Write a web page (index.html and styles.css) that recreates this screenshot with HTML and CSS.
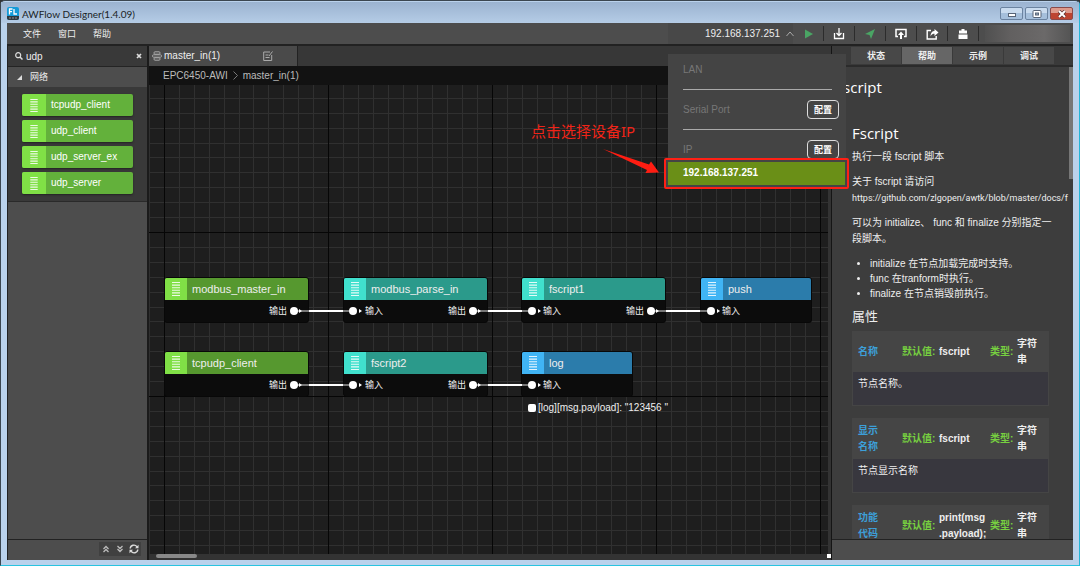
FILE: index.html
```html
<!DOCTYPE html>
<html lang="zh-CN">
<head>
<meta charset="utf-8">
<title>AWFlow Designer</title>
<link rel="stylesheet" href="styles.css">
</head>
<body>
<svg class="defs" width="0" height="0" aria-hidden="true">
  <symbol id="bars" viewBox="0 0 8 14"><path d="M0 .5h8M0 3.1h8M0 5.7h8M0 8.3h8M0 10.9h8M0 13.5h8" stroke="#fff" stroke-opacity=".85" stroke-width="1.1"/></symbol>
</svg>
<div class="window">
  <header class="titlebar">
    <svg class="logo" width="12" height="13" viewBox="0 0 12 13"><rect width="12" height="13" rx="2" fill="#159bd8"/><path d="M0 9h12v2a2 2 0 0 1-2 2H2a2 2 0 0 1-2-2z" fill="#30383e"/><path d="M2.500 7.500V2H5.500M2.500 4.600H5M7 2V7H10" fill="none" stroke="#fff" stroke-width="1.300"/><path d="M2 11h8" stroke="#8a9298" stroke-dasharray="2 1"/></svg>
    <span class="title">AWFlow Designer(1.4.09)</span>
    <button class="winbtn" aria-label="最小化"><svg width="10" height="8" viewBox="0 0 10 8"><rect x="1.500" y="3.500" width="7" height="3" fill="#fff" stroke="#586577"/></svg></button>
    <button class="winbtn" aria-label="最大化"><svg width="10" height="8" viewBox="0 0 10 8"><rect x="1" y=".5" width="8" height="7" rx="1" fill="#fff" stroke="#586577"/><rect x="3.500" y="3" width="3" height="2" fill="#9ab" stroke="#586577"/></svg></button>
    <button class="winbtn close" aria-label="关闭"><svg width="10" height="8" viewBox="0 0 10 8"><path d="M2 1l6 6M8 1L2 7" stroke="#5b3030" stroke-width="3.400"/><path d="M2 1l6 6M8 1L2 7" stroke="#fff" stroke-width="2"/></svg></button>
  </header>
  <div class="app">
    <div class="menubar">
      <nav class="menus"><button>文件</button><button>窗口</button><button>帮助</button></nav>
      <div class="device">
        <button class="device-btn">192.168.137.251 <svg width="8" height="6" viewBox="0 0 8 6"><path d="M.5 5L4 1l3.500 4" fill="none" stroke="#aaa"/></svg></button>
        <div class="dropdown">
          <div class="group"><span>LAN</span></div>
          <hr>
          <div class="group"><span>Serial Port</span><button class="config">配置</button></div>
          <hr>
          <div class="group"><span>IP</span><button class="config">配置</button></div>
          <button class="chosen">192.168.137.251</button>
        </div>
      </div>
      <div class="tools">
        <button aria-label="运行"><svg width="12" height="12" viewBox="0 0 12 12"><path d="M3 1.500v9L11 6z" fill="#4aa564"/></svg></button>
        <button aria-label="下载"><svg width="12" height="12" viewBox="0 0 12 12"><path d="M1.500 5v5.500h9V5M6 0v7M3.500 5L6 7.500 8.500 5" fill="none" stroke="#fff" stroke-width="1.300"/></svg></button>
        <button aria-label="发送"><svg width="12" height="12" viewBox="0 0 12 12"><path d="M11 1L1 6l4.500 1L7 11z" fill="#4aa564"/></svg></button>
        <button aria-label="上传"><svg width="12" height="12" viewBox="0 0 12 12"><path d="M3 8.500H1V1.500h10v7H9" fill="none" stroke="#fff" stroke-width="1.500"/><path d="M6 3.500L3 7h2v4h2V7h2z" fill="#fff"/></svg></button>
        <button aria-label="分享"><svg width="13" height="12" viewBox="0 0 13 12"><path d="M5 2.500H1.200v8.500h9V8" fill="none" stroke="#fff" stroke-width="1.400"/><path d="M8.500 1v2C6 3 4.500 5 4.500 8.500 5.500 6.300 7 5.800 8.500 5.800V8l4-3.500z" fill="#fff"/></svg></button>
        <button aria-label="清除"><svg width="12" height="12" viewBox="0 0 12 12"><path d="M4.500 1h3v1.500H10V5.500H2V2.500h2.500zM1.500 6.500h9V11h-9z" fill="#fff"/></svg></button>
        <span class="account"></span>
      </div>
    </div>
    <div class="main">
      <aside class="sidebar">
        <div class="search">
          <svg width="8" height="8" viewBox="0 0 8 8"><circle cx="3.200" cy="3.200" r="2.500" fill="none" stroke="#ddd" stroke-width="1.200"/><path d="M5 5l2.500 2.500" stroke="#ddd" stroke-width="1.500"/></svg>
          <input type="text" value="udp" aria-label="搜索节点">
          <button aria-label="清空"><svg width="6" height="6" viewBox="0 0 6 6"><path d="M1 1l4 4M5 1L1 5" stroke="#ddd" stroke-width="1.700"/></svg></button>
        </div>
        <button class="category"><svg width="5" height="5" viewBox="0 0 5 5"><path d="M5 0v5H0z" fill="#ddd"/></svg>网络</button>
        <div class="palette">
          <button class="item"><i><svg width="8" height="13"><use href="#bars"/></svg></i>tcpudp_client</button>
          <button class="item"><i><svg width="8" height="13"><use href="#bars"/></svg></i>udp_client</button>
          <button class="item"><i><svg width="8" height="13"><use href="#bars"/></svg></i>udp_server_ex</button>
          <button class="item"><i><svg width="8" height="13"><use href="#bars"/></svg></i>udp_server</button>
        </div>
        <footer class="sidefoot">
          <div class="footbtns">
            <button aria-label="全部折叠"><svg width="8" height="8" viewBox="0 0 8 8"><path d="M1.500 4L4 1.500 6.500 4M1.500 7L4 4.500 6.500 7" fill="none" stroke="#bbb" stroke-width="1.300"/></svg></button>
            <button aria-label="全部展开"><svg width="8" height="8" viewBox="0 0 8 8"><path d="M1.500 1L4 3.500 6.500 1M1.500 4L4 6.500 6.500 4" fill="none" stroke="#bbb" stroke-width="1.300"/></svg></button>
            <button aria-label="刷新"><svg width="10" height="10" viewBox="0 0 10 10"><path d="M1.200 4.500C1.500 1 6 0 8 2.800M8.800 5.500C8.500 9 4 10 2 7.200" fill="none" stroke="#ddd" stroke-width="1.400"/><path d="M9.500.8v3.500H6zM.5 9.200V5.700H4z" fill="#ddd"/></svg></button>
          </div>
        </footer>
      </aside>
      <section class="center">
        <div class="tabs"><div class="tab">
          <svg width="10" height="10" viewBox="0 0 10 10" fill="none" stroke="#aaa"><rect x="2" y=".8" width="6" height="2.400" rx="1"/><rect x=".5" y="3.800" width="9" height="2.400" rx="1"/><rect x="2" y="6.800" width="6" height="2.400" rx="1"/></svg>
          <span>master_in(1)</span>
          <svg width="10" height="10" viewBox="0 0 10 10" fill="none" stroke="#aaa"><path d="M7 1H.7v8.500h8V4M2.500 4h3M2.500 6.500h4M6 5l3.500-4.500"/></svg>
        </div></div>
        <nav class="crumbs"><a href="#">EPC6450-AWI</a><svg width="5" height="9" viewBox="0 0 5 9"><path d="M.5.5l4 4-4 4" fill="none" stroke="#777"/></svg><a href="#">master_in(1)</a></nav>
        <div class="canvas">
          <svg class="layer" width="100%" height="100%">
            <defs><pattern id="grid" x="15" y="-17" width="164" height="164" patternUnits="userSpaceOnUse">
              <path d="M15.500 0v164M30.500 0v164M45.500 0v164M60.500 0v164M75.500 0v164M89.500 0v164M104.500 0v164M119.500 0v164M134.500 0v164M149.500 0v164M0 15.500h164M0 30.500h164M0 45.500h164M0 60.500h164M0 75.500h164M0 89.500h164M0 104.500h164M0 119.500h164M0 134.500h164M0 149.500h164" stroke="#303030"/>
              <path d="M.5 0v164M0 .5h164" stroke="#060606"/></pattern></defs>
            <rect width="100%" height="100%" fill="url(#grid)"/>
          </svg>
          <div class="node green n1"><h3><i><svg width="8" height="14"><use href="#bars"/></svg></i>modbus_master_in</h3><p><span class="out">输出</span></p></div>
          <div class="node teal n2"><h3><i><svg width="8" height="14"><use href="#bars"/></svg></i>modbus_parse_in</h3><p><span class="in">输入</span><span class="out">输出</span></p></div>
          <div class="node teal n3"><h3><i><svg width="8" height="14"><use href="#bars"/></svg></i>fscript1</h3><p><span class="in">输入</span><span class="out">输出</span></p></div>
          <div class="node blue n4"><h3><i><svg width="8" height="14"><use href="#bars"/></svg></i>push</h3><p><span class="in">输入</span></p></div>
          <div class="node green n5"><h3><i><svg width="8" height="14"><use href="#bars"/></svg></i>tcpudp_client</h3><p><span class="out">输出</span></p></div>
          <div class="node teal n6"><h3><i><svg width="8" height="14"><use href="#bars"/></svg></i>fscript2</h3><p><span class="in">输入</span><span class="out">输出</span></p></div>
          <div class="node blue n7"><h3><i><svg width="8" height="14"><use href="#bars"/></svg></i>log</h3><p><span class="in">输入</span></p></div>
          <svg class="layer" width="100%" height="100%">
            <path d="M145 226h60M324 226h60M502 226h60M145 300h60M324 300h60" stroke="#777" stroke-width="2"/>
            <path d="M160 226h34M339 226h34M517 226h34M160 300h34M339 300h34" stroke="#fff" stroke-width="2"/>
            <g fill="#fff"><circle cx="145" cy="226" r="4"/><circle cx="204" cy="226" r="4"/><circle cx="324" cy="226" r="4"/><circle cx="383" cy="226" r="4"/><circle cx="502" cy="226" r="4"/><circle cx="562" cy="226" r="4"/><circle cx="145" cy="300" r="4"/><circle cx="204" cy="300" r="4"/><circle cx="324" cy="300" r="4"/><circle cx="383" cy="300" r="4"/>
            <path d="M150 224l3 2-3 2zM210 224l3 2-3 2zM329 224l3 2-3 2zM389 224l3 2-3 2zM507 224l3 2-3 2zM568 224l3 2-3 2zM150 298l3 2-3 2zM210 298l3 2-3 2zM329 298l3 2-3 2zM389 298l3 2-3 2z"/></g>
            <path d="M454 64L500 79.500 502 76.500 510 87.500 496.500 88 498 85z" fill="#ff1d12"/>
          </svg>
          <div class="status">[log][msg.payload]: "123456 "</div>
          <div class="hint">点击选择设备IP</div>
        </div>
        <div class="hscroll"><i></i><b></b></div>
      </section>
      <aside class="panel">
        <div class="paneltabs"><button>状态</button><button class="on">帮助</button><button>示例</button><button>调试</button></div>
        <div class="help">
          <h1>fscript</h1>
          <h2>Fscript</h2>
          <p>执行一段 fscript 脚本</p>
          <p>关于 fscript 请访问<br><a class="url" href="#">https://github.com/zlgopen/awtk/blob/master/docs/f</a></p>
          <p>可以为 initialize、 func 和 finalize 分别指定一段脚本。</p>
          <ul><li>initialize 在节点加载完成时支持。</li><li>func 在tranform时执行。</li><li>finalize 在节点销毁前执行。</li></ul>
          <h4>属性</h4>
          <div class="prop"><div class="head"><b class="name">名称</b><b class="key">默认值:</b><b>fscript</b><b class="key">类型:</b><b>字符串</b></div><div class="desc">节点名称。</div></div>
          <div class="prop"><div class="head"><b class="name">显示名称</b><b class="key">默认值:</b><b>fscript</b><b class="key">类型:</b><b>字符串</b></div><div class="desc">节点显示名称</div></div>
          <div class="prop"><div class="head"><b class="name">功能代码</b><b class="key">默认值:</b><b>print(msg<br>.payload);</b><b class="key">类型:</b><b>字符串</b></div></div>
          <i class="vthumb"></i>
        </div>
        <footer class="panelfoot"></footer>
      </aside>
    </div>
  </div>
</div>
</body>
</html>
```
FILE: styles.css
```css
* { box-sizing: border-box; }
body { margin: 0; height: 100vh; background: #333; font: 10px/14px "Liberation Sans", "Noto Sans CJK SC", sans-serif; color: #eee; overflow: hidden; }
button { font: inherit; color: inherit; background: none; border: 0; padding: 0; }
h1, h2, h3, h4, p, ul { margin: 0; font-weight: 400; }
svg { display: block; flex: none; }
.defs { position: absolute; }

.window { height: 100vh; display: flex; flex-direction: column; padding: 1px 6px 5px 6px; background: #bad2ec; border: 1px solid #3b4650; border-bottom: 1px solid #28c4e0; border-right-color: #23b5d8; border-radius: 5px 5px 0 0; }
.titlebar { display: flex; align-items: center; height: 21px; flex: none; background: linear-gradient(#9bb3d0, #b5cce6); margin: 0 -6px; padding: 2px 6px 0; gap: 1px; }
.title { color: #1a1f26; font: 10px/16px Lato, sans-serif; margin-left: 2px; flex: 1; }
.winbtn { width: 23px; height: 13px; border: 1px solid #6b83a0; border-radius: 2px; background: linear-gradient(#c9dbee 50%, #a5bfdb 50%); display: grid; place-items: center; }
.winbtn + .winbtn { margin-left: 1px; }
.close { background: linear-gradient(#dd9a8c 50%, #bd4431 50%); border-color: #8a4a4a; }

.app { flex: 1; min-height: 0; display: flex; flex-direction: column; background: #333; }
.menubar { height: 23px; flex: none; display: flex; background: #4d4d4d; border-bottom: 2px solid #222; align-items: stretch; }
.menus { display: flex; gap: 17px; padding-left: 16px; flex: 1; font-size: 9px; }
.device { position: relative; width: 125px; background: #484848; }
.device-btn { display: flex; align-items: center; gap: 6px; height: 21px; padding-left: 37px; white-space: nowrap; }
.dropdown { position: absolute; z-index: 5; top: 31px; left: 0; width: 178px; background: #444; display: flex; flex-direction: column; }
.group { height: 35px; padding: 0 7px 4px 15px; display: flex; justify-content: space-between; align-items: center; color: #777; }
.dropdown hr { width: 149px; margin: 0 0 4px 15px; border: 0; border-top: 1px solid #aaa; }
.config { width: 32px; height: 19px; border: 1px solid #ddd; border-radius: 4px; color: #fff; font-size: 9px; font-weight: 700; }
.chosen { height: 31px; margin: -11px -3px 0 -4px; padding: 0 0 2px 17px; text-align: left; font-weight: 700; background: #6a8f17; border: 2px solid #ff2015; border-radius: 2px; box-shadow: inset 0 0 0 2px #444; color: #fff; z-index: 1; }
.tools { display: flex; align-items: center; }
.tools button { width: 31px; height: 15px; display: grid; place-items: center; border-right: 1px solid #2c2c2c; }
.account { width: 85px; height: 17px; margin: 0 3px 0 6px; background: linear-gradient(90deg, #505050, #626060 30%, #6b6969 70%, #555); }

.main { flex: 1; min-height: 0; display: flex; }
.sidebar { width: 142px; flex: none; display: flex; flex-direction: column; border-right: 2px solid #1b1b1b; border-left: 1px solid #222; background: #4d4d4d; }
.search { height: 21px; display: flex; align-items: center; padding: 0 5px 0 7px; gap: 3px; background: #393939; border-bottom: 1px solid #242424; }
.search input { flex: 1; min-width: 0; border: 0; padding: 2px 0 0; background: none; color: #eee; font: 10px/14px "Liberation Sans", sans-serif; outline: 0; }
.category { height: 20px; display: flex; align-items: center; gap: 8px; padding-left: 9px; font-size: 9px; }
.palette { display: flex; flex-direction: column; gap: 4px; padding: 7px 14px; background: #393939; border-bottom: 1px solid #2a2a2a; }
.item { height: 22px; display: flex; align-items: center; gap: 5px; background: #63b13b; border-radius: 2px; color: #fff; overflow: hidden; box-shadow: 0 1px 2px #222; }
.item i { width: 24px; height: 22px; display: grid; place-items: center; background: #80e046; }
.sidefoot { margin-top: auto; height: 21px; border-top: 1px solid #222; display: flex; justify-content: flex-end; align-items: center; padding: 0 6px 2px 0; }
.footbtns { display: flex; background: #404040; }
.footbtns button { width: 14px; height: 14px; display: grid; place-items: center; }

.center { flex: 1; min-width: 0; display: flex; flex-direction: column; background: #333; }
.tabs { height: 20px; background: #373737; flex: none; }
.tab { width: 149px; height: 20px; display: flex; align-items: center; gap: 2px; padding: 0 24px 0 3px; background: #4a4a4a; border-right: 1px solid #222; }
.tab span { flex: 1; }
.crumbs { height: 19px; flex: none; display: flex; align-items: center; gap: 5px; padding-left: 14px; background: #121212; }
.crumbs a { color: #bbb; text-decoration: none; }
.canvas { flex: 1; position: relative; overflow: hidden; background: #1e1e1e; margin-right: 3px; }
.layer { position: absolute; inset: 0; }
.hscroll { height: 6px; flex: none; padding-left: 7px; display: flex; justify-content: space-between; }
.hscroll i { width: 41px; height: 4px; background: #888; border-radius: 2px; }
.hscroll b { width: 4px; height: 4px; background: #fff; }

.node { position: absolute; width: 145px; height: 46px; border: 1px solid #080808; border-radius: 3px; background: #0c0c0c; overflow: hidden; }
.node h3 { display: flex; align-items: center; gap: 5px; height: 22px; font-size: 11px; }
.node i { width: 22px; height: 22px; display: grid; place-items: center; }
.node p { height: 22px; display: flex; align-items: center; padding: 0 21px; font-size: 9px; }
.out { margin-left: auto; }
.green h3 { background: #56982f; }
.green i { background: #80e046; }
.teal h3 { background: #2b9a8b; }
.teal i { background: #40e0cd; }
.blue h3 { background: #2b7cab; }
.blue i { background: #40b4f4; }
.n1, .n2, .n3, .n4 { top: 192px; }
.n5, .n6, .n7 { top: 266px; }
.n1, .n5 { left: 15px; }
.n2, .n6 { left: 194px; }
.n3, .n7 { left: 372px; }
.n4 { left: 551px; }
.n4, .n7 { width: 112px; }
.status { position: absolute; left: 379px; top: 316px; display: flex; align-items: center; gap: 2px; }
.status::before { content: ""; width: 8px; height: 8px; border-radius: 2px; background: #fff; }
.hint { position: absolute; left: 382px; top: 36px; font: 15px/20px "Noto Sans", "Noto Sans CJK SC", sans-serif; color: #f02418; }

.panel { width: 242px; flex: none; border-left: 1px solid #151515; display: flex; flex-direction: column; background: #3d3d3d; }
.paneltabs { height: 21px; flex: none; display: flex; gap: 1px; padding: 1px 19px; border-bottom: 2px solid #2b2b2b; background: #3a3a3a; }
.paneltabs button { flex: 1; background: #484848; font-size: 9px; font-weight: 700; }
.paneltabs .on { background: #666; }
.help { position: relative; flex: 1; min-height: 0; overflow: hidden; padding: 9px 24px 0 20px; line-height: 16px; }
.help h1, .help h2 { font: 15px/22px "Open Sans", sans-serif; color: #fff; }
.help h1 { margin: 0 0 24px -14px; }
.help h2 { margin-bottom: 5px; }
.help p { margin: 0 -6px 9px 0; }
.url { white-space: nowrap; font-family: Roboto, sans-serif; font-size: 9px; color: inherit; text-decoration: none; }
.help ul { padding-left: 18px; line-height: 15px; }
.help h4 { font-size: 13px; line-height: 20px; margin: 6px 0 4px; }
.prop { background: #454545; margin-bottom: 12px; padding: 0 1px 1px; }
.head { display: grid; grid-template-columns: 41px 34px 48px 24px 22px; column-gap: 3px; padding: 5px; height: 41px; align-items: center; }
.name { color: #3d9fd8; width: 24px; }
.key { color: #77d040; white-space: nowrap; }
.desc { height: 33px; background: #38373e; padding: 4px 5px; }
.vthumb { position: absolute; right: 0; top: 0; width: 4px; height: 112px; background: #777; }
.panelfoot { height: 21px; flex: none; background: #4d4d4d; border-top: 1px solid #222; }
```
